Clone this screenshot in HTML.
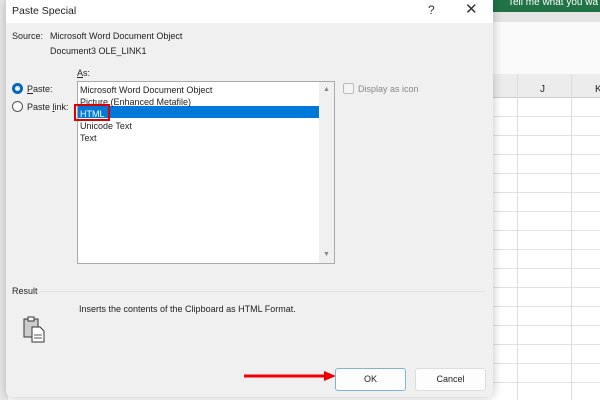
<!DOCTYPE html>
<html><head><style>
*{margin:0;padding:0;box-sizing:border-box}
body{width:600px;height:400px;overflow:hidden;position:relative;background:#fff;font-family:"Liberation Sans",sans-serif;font-size:9px;color:#222}
.a{position:absolute}
</style></head><body>
<div class="a" style="left:0;top:0;width:600px;height:12px;background:#217346"></div>
<div class="a" style="left:508px;top:-3px;color:#fff;font-size:10px;white-space:nowrap">Tell me what you wa</div>
<div class="a" style="left:0;top:12px;width:600px;height:10px;background:#e4e4e4"></div>
<div class="a" style="left:0;top:22px;width:600px;height:52px;background:#fafafa"></div>
<div class="a" style="left:0;top:74px;width:600px;height:24px;background:#ececec;border-bottom:1px solid #ccc"></div>
<div class="a" style="left:540px;top:84px;font-size:10px">J</div>
<div class="a" style="left:595px;top:84px;font-size:10px">K</div>
<div class="a" style="left:0;top:98px;width:600px;height:302px;background-image:repeating-linear-gradient(to bottom,transparent 0 18px,#e1e1e1 18px 19px)"></div>
<div class="a" style="left:517px;top:74px;width:1px;height:326px;background:#ddd"></div>
<div class="a" style="left:571px;top:74px;width:1px;height:326px;background:#ddd"></div>
<div class="a" style="left:0;top:0;width:8px;height:400px;background:#e8e8e8"></div>
<div class="a" style="left:6px;top:0;width:487px;height:397px;background:#f0f0f0;border-radius:0 0 6px 6px;box-shadow:0 0 10px rgba(0,0,0,.25)"></div>
<div class="a" style="left:6px;top:0;width:487px;height:23px;background:#fff"></div>
<div class="a" style="left:12px;top:5px;font-size:10.5px">Paste Special</div>
<div class="a" style="left:428px;top:3px;font-size:12px;color:#333">?</div>
<div class="a" style="left:465px;top:0px;font-size:15px;color:#333">✕</div>
<div class="a" style="left:12px;top:31px">Source:</div>
<div class="a" style="left:50px;top:31px">Microsoft Word Document Object</div>
<div class="a" style="left:50px;top:46px">Document3 OLE_LINK1</div>
<div class="a" style="left:77px;top:68px"><u>A</u>s:</div>
<div class="a" style="left:12px;top:83px;width:11px;height:11px;border-radius:50%;border:3px solid #0067c0;background:#fff"></div>
<div class="a" style="left:27px;top:84px"><u>P</u>aste:</div>
<div class="a" style="left:12px;top:101px;width:11px;height:11px;border-radius:50%;border:1px solid #555;background:#fff"></div>
<div class="a" style="left:27px;top:102px">Paste <u>l</u>ink:</div>
<div class="a" style="left:77px;top:81px;width:258px;height:183px;background:#fff;border:1px solid #aaa"></div>
<div class="a" style="left:319px;top:82px;width:15px;height:181px;background:#f0f0f0"></div>
<div class="a" style="left:323px;top:86px;font-size:7px;color:#888">▲</div>
<div class="a" style="left:323px;top:251px;font-size:7px;color:#888">▼</div>
<div class="a" style="left:78px;top:106px;width:241px;height:12px;background:#0078d7"></div>
<div class="a" style="left:80px;top:84px;line-height:12px">Microsoft Word Document Object<br>Picture (Enhanced Metafile)<br><span style="color:#fff">HTML</span><br>Unicode Text<br>Text</div>
<div class="a" style="left:74px;top:104px;width:36px;height:17px;border:2px solid #d00"></div>
<div class="a" style="left:343px;top:83px;width:11px;height:11px;border:1px solid #bbb;background:#f4f4f4;border-radius:2px"></div>
<div class="a" style="left:358px;top:84px;color:#888">Display as icon</div>
<div class="a" style="left:12px;top:286px">Result</div>
<div class="a" style="left:38px;top:291px;width:447px;height:1px;background:#e2e2e2"></div>
<div class="a" style="left:79px;top:304px">Inserts the contents of the Clipboard as HTML Format.</div>
<svg class="a" style="left:22px;top:316px" width="26" height="28" viewBox="0 0 26 28"><rect x="2" y="3" width="14" height="18" fill="#ccc" stroke="#333"/><rect x="6" y="1" width="6" height="4" fill="#fff" stroke="#333"/><path d="M10 11h8l4 4v11H10z" fill="#fff" stroke="#333"/><path d="M12 19h8M12 22h8" stroke="#555"/></svg>
<svg class="a" style="left:210px;top:369px" width="126" height="14"><path d="M34 7L120 7" stroke="#e00" stroke-width="3"/><path d="M114 2L126 7L114 12z" fill="#e00"/></svg>
<div class="a" style="left:335px;top:368px;width:71px;height:23px;background:#fdfdfd;border:1px solid #7eb4d4;border-radius:3px;text-align:center;line-height:21px">OK</div>
<div class="a" style="left:415px;top:368px;width:71px;height:23px;background:#fdfdfd;border:1px solid #ddd;border-radius:3px;text-align:center;line-height:21px">Cancel</div>
</body></html>
